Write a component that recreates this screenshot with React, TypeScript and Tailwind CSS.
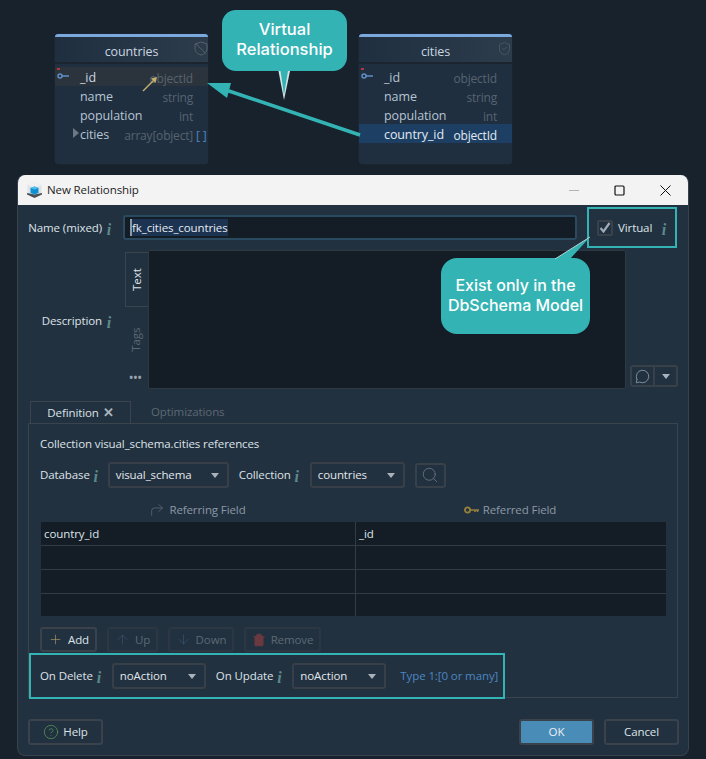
import React from "react";
import {
  ArrowDown,
  ArrowUp,
  CircleHelp,
  CornerUpRight,
  MessageCircle,
  Plus,
  Search,
  ShieldCheck,
  Trash2,
} from "lucide-react";

const Info = () => (
  <span className="inline-block w-[10px] translate-y-[3px] text-center font-['Liberation_Serif',serif] text-[16px] font-bold italic leading-[14px] text-[#5a8a8c]">
    i
  </span>
);

const Caret = () => (
  <span className="h-0 w-0 border-x-[4px] border-t-[5px] border-x-transparent border-t-[#a9b2bb]" />
);

const Select = ({ value, width }: { value: string; width: string }) => (
  <div
    className={`flex h-[26px] ${width} items-center justify-between rounded-[3px] border-2 border-[#383f48] pl-[6px] pr-[8px] text-[#e1e6ea]`}
  >
    <span>{value}</span>
    <Caret />
  </div>
);

const ToolButton = ({
  width,
  disabled,
  children,
}: {
  width: string;
  disabled?: boolean;
  children: React.ReactNode;
}) => (
  <div
    className={`flex h-[25px] ${width} items-center justify-center gap-[5px] rounded-[3px] border-2 ${
      disabled ? "border-[#2c3743] text-[#5c6975]" : "border-[#3b424b] text-[#dfe4e9]"
    }`}
  >
    {children}
  </div>
);

type Field = { name: string; type: string; typeClass?: string; suffix?: string };

const KeyMark = () => (
  <>
    <span className="absolute left-[2px] top-[1px] h-[2px] w-[3px] bg-[#b5333c]" />
    <svg className="absolute left-[2px] top-[5px]" width="13" height="8" viewBox="0 0 13 8">
      <circle cx="3" cy="4" r="2" fill="none" stroke="#5f8fc4" strokeWidth="1.5" />
      <path d="M5 4h7" stroke="#5f8fc4" strokeWidth="1.5" />
    </svg>
  </>
);

const SlashedShield = () => (
  <svg width="14" height="15" viewBox="0 0 14 15" fill="none" stroke="currentColor" strokeWidth="1">
    <path d="M7 1l6 2v5c0 3-2.500 5-6 6-3.500-1-6-3-6-6V3z" />
    <path d="M2 3l10 9.500" />
  </svg>
);

const TableNode = ({
  title,
  left,
  fields,
  activeRow,
  rowClass,
  icon,
  caretRow,
}: {
  title: string;
  left: string;
  fields: Field[];
  activeRow: number;
  rowClass: string;
  icon: React.ReactNode;
  caretRow?: number;
}) => (
  <div
    className={`absolute top-[34px] ${left} h-[130px] w-[153px] overflow-hidden rounded-[3px] border-t-[3px] border-[#7ba9de] bg-[#1f2f40] font-['Open_Sans',sans-serif] shadow-[0_0_0_1px_#1a2530]`}
  >
    <div className="relative flex h-[25px] items-center justify-center bg-gradient-to-r from-[#1f2f40] to-[#2d3c4b] pt-[6px] text-[12.5px] text-[#c9d6e2]">
      {title}
      <span className="absolute right-0 top-[4px] text-[#56616c]">{icon}</span>
    </div>
    <div className="h-[2px] bg-[#1b2530]" />
    <div className="mt-[3px]">
      {fields.map((f, i) => (
        <div
          key={f.name}
          className={`relative flex h-[19px] items-center justify-between whitespace-nowrap pl-[25px] pr-[15px] pt-[4px] text-[12.5px] ${
            i === activeRow ? rowClass : "text-[#b6c4d1]"
          }`}
        >
          {i === 0 && <KeyMark />}
          {i === caretRow && (
            <span className="absolute left-[18px] top-[4px] h-0 w-0 border-y-[5px] border-l-[6px] border-y-transparent border-l-[#6d7883]" />
          )}
          <span>{f.name}</span>
          <span className={`relative text-[12px] tracking-[-0.2px] ${f.typeClass ?? "text-[#58636e]"}`}>
            {f.type}
            {f.suffix && (
              <span className="absolute left-full ml-[3px] text-[#4a87c0]">{f.suffix}</span>
            )}
          </span>
        </div>
      ))}
    </div>
  </div>
);

const WindowIcon = () => (
  <svg width="17" height="16" viewBox="0 0 17 16">
    <path d="M8.500 0l7 3v8l-7 3-7-3V3z" fill="#dfe3e6" />
    <path d="M8.500 0l7 3-7 3-7-3z" fill="#eef0f2" />
    <path d="M1 11l7.500 1.500L16 11v1.500L8.500 16 1 12.500z" fill="#4a4f54" />
    <path d="M4.500 6l4-1.500 4 1.500v5l-4 1.500-4-1.500z" fill="#0f8fd0" />
    <path d="M4.500 6l4 1.500 4-1.500-4-1.500z" fill="#4fc0ee" />
  </svg>
);

const App = () => {
  const rows = [
    ["country_id", "_id"],
    ["", ""],
    ["", ""],
    ["", ""],
  ];

  return (
    <div className="relative h-[759px] w-[706px] overflow-hidden whitespace-nowrap bg-[#18222c] font-['Open_Sans',sans-serif] text-[11.5px] tracking-[-0.1px] text-[#dde3e8]">
      {/* diagram */}
      <div className="relative h-[175px]">
        <TableNode
          title="countries"
          left="left-[55px]"
          activeRow={0}
          rowClass="bg-[#2b333d] text-[#c9d6e2]"
          caretRow={3}
          icon={<SlashedShield />}
          fields={[
            { name: "_id", type: "objectId" },
            { name: "name", type: "string" },
            { name: "population", type: "int" },
            { name: "cities", type: "array[object]", suffix: "[ ]" },
          ]}
        />
        <TableNode
          title="cities"
          left="left-[359px]"
          activeRow={3}
          rowClass="bg-[#1d3f63] text-[#e2eaf1]"
          icon={<ShieldCheck size={15} strokeWidth={1.1} />}
          fields={[
            { name: "_id", type: "objectId" },
            { name: "name", type: "string" },
            { name: "population", type: "int" },
            { name: "country_id", type: "objectId", typeClass: "text-[#e2eaf1]" },
          ]}
        />
        <div className="absolute left-[222px] top-[10px] flex h-[61px] w-[125px] items-center justify-center rounded-[14px] bg-[#34b3b4] pb-[3px] text-center font-['Inter',sans-serif] text-[16.5px] font-medium leading-[20px] tracking-normal text-white">
          Virtual
          <br />
          Relationship
        </div>
      </div>

      {/* dialog */}
      <div className="ml-[17px] h-[581px] w-[672px] overflow-hidden rounded-b-lg rounded-t-lg border border-t-0 border-[#38424d] bg-[#223140]">
        <div className="flex h-[30px] items-center bg-[#f3f3f3] pl-[8px] text-[#1c1c1c]">
          <WindowIcon />
          <span className="ml-[4px] flex-1">New Relationship</span>
          <svg className="mr-[34px]" width="11" height="11" viewBox="0 0 11 11">
            <path d="M0 5.5h10" stroke="#b5b5b5" />
          </svg>
          <svg className="mr-[35px]" width="11" height="11" viewBox="0 0 11 11">
            <rect x="1" y="1" width="9" height="9" rx="1" fill="none" stroke="#111" strokeWidth="1.2" />
          </svg>
          <svg className="mr-[17px]" width="11" height="11" viewBox="0 0 11 11">
            <path d="M.5.5l10 10M10.5.5l-10 10" stroke="#111" />
          </svg>
        </div>

        <div className="pl-[10px] pr-[10px] pt-[10px]">
          <div className="flex h-[25px] items-center">
            <div className="w-[74px] text-right">Name (mixed)</div>
            <span className="ml-[2px] w-[19px]">
              <Info />
            </span>
            <div className="flex h-[25px] w-[454px] items-center rounded-[3px] border-2 border-[#2a4a60] bg-[#141d26] pl-[5px] text-[#e6ebef]">
              <span className="border-l-2 border-[#8e9ba8] bg-[#1c3352] leading-[17px]">fk_cities_countries</span>
            </div>
            <div className="-my-[8px] ml-[10px] flex h-[41px] w-[90px] items-center border-2 border-[#34b3b4] pl-[8px]">
              <span className="flex h-[16px] w-[16px] items-center justify-center rounded-[2px] border-2 border-[#39414b]">
                <svg width="12" height="11" viewBox="0 0 12 11">
                  <path d="M1.500 6l3 3.500L10.500 1" fill="none" stroke="#9eaab5" strokeWidth="2.200" />
                </svg>
              </span>
              <span className="ml-[5px] flex-1">Virtual</span>
              <span className="mr-[6px]">
                <Info />
              </span>
            </div>
          </div>

          <div className="mt-[10px] flex h-[139px]">
            <div className="flex w-[95px] items-center pt-[3px]">
              <div className="w-[74px] text-right">Description</div>
              <span className="ml-[2px]">
                <Info />
              </span>
            </div>
            <div className="flex w-[25px] flex-col items-end">
              <div className="mt-[2px] flex h-[55px] w-[23px] items-center justify-center border border-r-0 border-[#3a444f] pr-[1px]">
                <span className="-rotate-90">Text</span>
              </div>
              <div className="flex h-[65px] w-[23px] items-center justify-center pr-[1px] text-[#5c6873]">
                <span className="-rotate-90">Tags</span>
              </div>
              <div className="mr-[6px] text-[10px] font-bold leading-[10px] tracking-[0.5px] text-[#9aa4ad]">•••</div>
            </div>
            <div className="w-[478px] rounded-[2px] border border-[#2f3943] bg-[#141d26]" />
            <div className="mb-[2px] ml-[4px] flex h-[22px] self-end">
              <div className="flex w-[25px] items-center justify-center rounded-l-[3px] border-2 border-[#38404a] text-[#b8c2cb]">
                <MessageCircle size={15} strokeWidth={1} />
              </div>
              <div className="flex w-[23px] items-center justify-center rounded-r-[3px] border-2 border-l-0 border-[#38404a]">
                <Caret />
              </div>
            </div>
          </div>

          {/* tabs */}
          <div className="mt-[12px] flex h-[22px]">
            <div className="ml-[2px] flex w-[101px] items-center justify-center gap-[4px] border border-b-0 border-[#3a444f]">
              Definition
              <span className="text-[13px] font-bold leading-none text-[#aab3bb]">✕</span>
            </div>
            <div className="ml-[20px] flex items-center text-[#5c6873]">Optimizations</div>
          </div>

          <div className="h-[275px] w-[650px] border border-[#3a444f] pl-[11px] pt-[12px]">
            <div className="h-[16px] leading-[16px]">Collection visual_schema.cities references</div>

            <div className="mt-[10px] flex h-[26px] items-center">
              <span>Database</span>
              <span className="ml-[1px] mr-[7px]">
                <Info />
              </span>
              <Select value="visual_schema" width="w-[121px]" />
              <span className="ml-[10px]">Collection</span>
              <span className="ml-[1px] mr-[8px]">
                <Info />
              </span>
              <Select value="countries" width="w-[95px]" />
              <div className="ml-[10px] flex h-[25px] w-[31px] items-center justify-center rounded-[3px] border-2 border-[#38404a] text-[#66717c]">
                <Search size={18} strokeWidth={1.2} />
              </div>
            </div>

            <div className="mt-[14px] flex h-[16px] items-center text-[#8b98a5]">
              <div className="flex w-[315px] items-center justify-center gap-[4px]">
                <CornerUpRight size={16} strokeWidth={1} className="text-[#68737e]" />
                Referring Field
              </div>
              <div className="flex w-[310px] items-center justify-center gap-[4px]">
                <svg width="15" height="8" viewBox="0 0 15 8">
                  <circle cx="3.500" cy="4" r="2.600" fill="none" stroke="#96803b" strokeWidth="1.800" />
                  <path d="M6 4h9M11 4v2M13.500 4v2" stroke="#96803b" strokeWidth="1.600" />
                </svg>
                Referred Field
              </div>
            </div>

            <div className="ml-[1px] mt-[4px] w-[625px] bg-[#141d26]">
              {rows.map((r, i) => (
                <div
                  key={i}
                  className={`flex items-center ${i < 3 ? "h-[24px] border-b border-[#333b44]" : "h-[22px]"}`}
                >
                  <div className="flex h-full w-[315px] items-center border-r border-[#333b44] pl-[3px]">{r[0]}</div>
                  <div className="pl-[3px]">{r[1]}</div>
                </div>
              ))}
            </div>

            <div className="mt-[11px] flex gap-[10px]">
              <ToolButton width="w-[57px]">
                <Plus size={15} strokeWidth={1} className="text-[#b3a066]" />
                Add
              </ToolButton>
              <ToolButton width="w-[51px]" disabled>
                <ArrowUp size={15} strokeWidth={1} className="text-[#3c5974]" />
                Up
              </ToolButton>
              <ToolButton width="w-[66px]" disabled>
                <ArrowDown size={15} strokeWidth={1} className="text-[#3c5974]" />
                Down
              </ToolButton>
              <ToolButton width="w-[77px]" disabled>
                <Trash2 size={14} strokeWidth={1.5} className="fill-[#6b3a40] text-[#6b3a40]" />
                Remove
              </ToolButton>
            </div>

            <div className="-ml-[11px] mt-[1px] flex h-[46px] w-[476px] items-center border-2 border-[#34b3b4] pl-[9px]">
              <span>On Delete</span>
              <span className="ml-[1px] mr-[8px]">
                <Info />
              </span>
              <Select value="noAction" width="w-[94px]" />
              <span className="ml-[10px]">On Update</span>
              <span className="ml-[1px] mr-[8px]">
                <Info />
              </span>
              <Select value="noAction" width="w-[94px]" />
              <span className="ml-[14px] text-[#4a87c0]">Type 1:[0 or many]</span>
            </div>
          </div>

          <div className="-mr-[1px] mt-[21px] flex h-[26px] justify-between">
            <div className="flex w-[75px] items-center justify-center gap-[4px] rounded-[3px] border-2 border-[#3b424b]">
              <CircleHelp size={16} strokeWidth={1} className="text-[#5fa35f]" />
              Help
            </div>
            <div className="flex gap-[10px]">
              <div className="flex w-[75px] items-center justify-center rounded-[3px] border-2 border-[#3b424b] bg-[#4a8cb8] text-[#e8eef3]">
                OK
              </div>
              <div className="flex w-[75px] items-center justify-center rounded-[3px] border-2 border-[#3b424b]">
                Cancel
              </div>
            </div>
          </div>
        </div>
      </div>

      {/* callout over the dialog */}
      <div className="absolute left-[441px] top-[258px] flex h-[76px] w-[149px] items-center justify-center rounded-[16px] bg-[#34b3b4] pb-[3px] text-center font-['Inter',sans-serif] text-[16px] font-medium leading-[20px] tracking-normal text-white">
        Exist only in the
        <br />
        DbSchema Model
      </div>

      {/* arrows and callout tails */}
      <svg className="pointer-events-none absolute left-0 top-0" width="706" height="759" viewBox="0 0 706 759">
        <path d="M143 91l12-12" stroke="#c2b06d" strokeWidth="1.5" />
        <path d="M157 77l-6 1.500 4.500 4.500z" fill="#c2b06d" />
        <path d="M360 135L226 90" stroke="#34b3b4" strokeWidth="3.500" />
        <path d="M207 83h24l-4 15z" fill="#34b3b4" />
        <path d="M278.500 71l5.500 29 6-29z" fill="#d8e4e8" />
        <path d="M280.500 71l3.500 24 4-24z" fill="#34b3b4" />
        <path d="M555 259l35-22-20 22z" fill="#34b3b4" />
        <path d="M555 259l35-22" stroke="#b8d0d4" strokeWidth="1" />
      </svg>
    </div>
  );
};

export default App;
